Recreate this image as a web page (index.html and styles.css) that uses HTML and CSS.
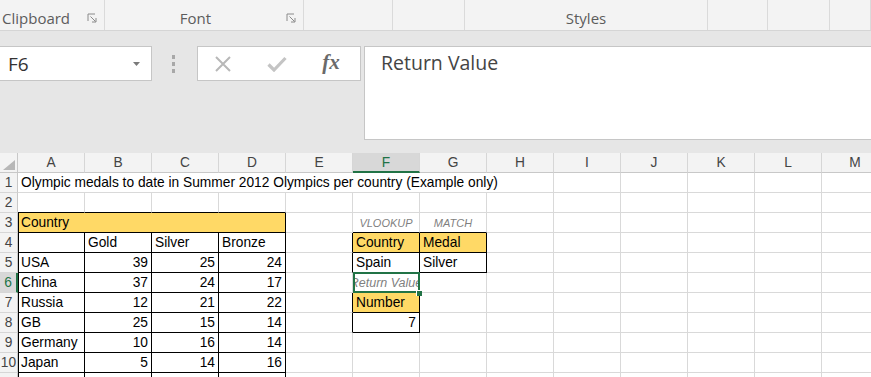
FILE: index.html
```html
<!DOCTYPE html>
<html lang="en">
<head>
    <meta charset="UTF-8">
    <title>Olympic medals - VLOOKUP / MATCH</title>
    <link rel="stylesheet" href="styles.css">
</head>
<body>
    <div class="ribbon">
        <div class="group group-left"><span class="label">Clipboard</span><span class="launcher"><svg width="10" height="10" viewBox="0 0 10 10"><path d="M1 8V1h7" fill="none" stroke="#8a8a8a"/><path d="M3.5 3.5l5 5M9 5v4H5" fill="none" stroke="#8a8a8a"/></svg></span></div>
        <div class="group"><span class="label">Font</span><span class="launcher"><svg width="10" height="10" viewBox="0 0 10 10"><path d="M1 8V1h7" fill="none" stroke="#8a8a8a"/><path d="M3.5 3.5l5 5M9 5v4H5" fill="none" stroke="#8a8a8a"/></svg></span></div>
        <div class="group"></div>
        <div class="group"></div>
        <div class="group"><span class="label">Styles</span></div>
        <div class="group"></div>
        <div class="group"></div>
        <div class="group"></div>
    </div>

    <div class="formula-bar">
        <div class="name-box">
            <span>F6</span>
            <svg class="drop" width="7" height="4" viewBox="0 0 7 4"><path d="M0 0h7L3.5 4z" fill="#7a7a7a"/></svg>
        </div>
        <div class="grip"><i></i><i></i><i></i></div>
        <div class="fx-buttons">
            <span class="fx-slot"><svg width="18" height="16" viewBox="0 0 18 16"><path d="M2 1l14 14M16 1L2 15" stroke="#b8b8b8" stroke-width="2"/></svg></span>
            <span class="fx-slot"><svg width="20" height="16" viewBox="0 0 20 16"><path d="M1.5 8.5l5.5 5.5L18.5 2" fill="none" stroke="#c4c4c4" stroke-width="3.2"/></svg></span>
            <span class="fx-slot fx">fx</span>
        </div>
        <div class="formula-input">Return Value</div>
    </div>

    <div class="sheet">
        <!-- column headers -->
        <div class="corner"><svg width="12" height="10" viewBox="0 0 12 10"><path d="M12 0v10H0z" fill="#b7b7b7"/></svg></div>
        <div class="h">A</div><div class="h">B</div><div class="h">C</div><div class="h">D</div><div class="h">E</div>
        <div class="h on">F</div><div class="h">G</div><div class="h">H</div><div class="h">I</div><div class="h">J</div>
        <div class="h">K</div><div class="h">L</div><div class="h">M</div>

        <!-- row 1 -->
        <div class="rh">1</div>
        <div class="c span8">Olympic medals to date in Summer 2012 Olympics per country (Example only)</div>
        <div class="c"></div><div class="c"></div><div class="c"></div><div class="c"></div><div class="c"></div>

        <!-- row 2 -->
        <div class="rh">2</div>
        <div class="c kb"></div><div class="c kb"></div><div class="c kb"></div><div class="c kb"></div>
        <div class="c"></div><div class="c"></div><div class="c"></div><div class="c"></div><div class="c"></div>
        <div class="c"></div><div class="c"></div><div class="c"></div><div class="c"></div>

        <!-- row 3 -->
        <div class="rh">3</div>
        <div class="c y k kl span4">Country</div>
        <div class="c"></div>
        <div class="c note kb">VLOOKUP</div><div class="c note kb">MATCH</div>
        <div class="c"></div><div class="c"></div><div class="c"></div><div class="c"></div><div class="c"></div><div class="c"></div>

        <!-- row 4 -->
        <div class="rh">4</div>
        <div class="c k kl"></div><div class="c k">Gold</div><div class="c k">Silver</div><div class="c k">Bronze</div>
        <div class="c kr"></div>
        <div class="c y k">Country</div><div class="c y k">Medal</div>
        <div class="c"></div><div class="c"></div><div class="c"></div><div class="c"></div><div class="c"></div><div class="c"></div>

        <!-- row 5 -->
        <div class="rh">5</div>
        <div class="c k kl">USA</div><div class="c k n">39</div><div class="c k n">25</div><div class="c k n">24</div>
        <div class="c kr"></div>
        <div class="c k">Spain</div><div class="c k">Silver</div>
        <div class="c"></div><div class="c"></div><div class="c"></div><div class="c"></div><div class="c"></div><div class="c"></div>

        <!-- row 6 -->
        <div class="rh on">6</div>
        <div class="c k kl">China</div><div class="c k n">37</div><div class="c k n">24</div><div class="c k n">17</div>
        <div class="c"></div>
        <div class="c kb sel"><span class="clip"><span>Return Value</span></span></div>
        <div class="c"></div><div class="c"></div><div class="c"></div><div class="c"></div><div class="c"></div><div class="c"></div><div class="c"></div>

        <!-- row 7 -->
        <div class="rh">7</div>
        <div class="c k kl">Russia</div><div class="c k n">12</div><div class="c k n">21</div><div class="c k n">22</div>
        <div class="c kr"></div>
        <div class="c y k">Number</div>
        <div class="c"></div><div class="c"></div><div class="c"></div><div class="c"></div><div class="c"></div><div class="c"></div><div class="c"></div>

        <!-- row 8 -->
        <div class="rh">8</div>
        <div class="c k kl">GB</div><div class="c k n">25</div><div class="c k n">15</div><div class="c k n">14</div>
        <div class="c kr"></div>
        <div class="c k n">7</div>
        <div class="c"></div><div class="c"></div><div class="c"></div><div class="c"></div><div class="c"></div><div class="c"></div><div class="c"></div>

        <!-- row 9 -->
        <div class="rh">9</div>
        <div class="c k kl">Germany</div><div class="c k n">10</div><div class="c k n">16</div><div class="c k n">14</div>
        <div class="c"></div><div class="c"></div><div class="c"></div><div class="c"></div><div class="c"></div>
        <div class="c"></div><div class="c"></div><div class="c"></div><div class="c"></div>

        <!-- row 10 -->
        <div class="rh">10</div>
        <div class="c k kl">Japan</div><div class="c k n">5</div><div class="c k n">14</div><div class="c k n">16</div>
        <div class="c"></div><div class="c"></div><div class="c"></div><div class="c"></div><div class="c"></div>
        <div class="c"></div><div class="c"></div><div class="c"></div><div class="c"></div>

        <!-- row 11 -->
        <div class="rh">11</div>
        <div class="c k kl"></div><div class="c k"></div><div class="c k"></div><div class="c k"></div>
        <div class="c"></div><div class="c"></div><div class="c"></div><div class="c"></div><div class="c"></div>
        <div class="c"></div><div class="c"></div><div class="c"></div><div class="c"></div>
    </div>
</body>
</html>
```

FILE: styles.css
```css
body {
    margin: 0;
    width: 871px;
    height: 377px;
    overflow: hidden;
    background: #fff;
    font-family: "Liberation Sans", Arial, sans-serif;
}

/* ribbon group labels */
.ribbon {
    height: 31px;
    box-sizing: border-box;
    background: #f3f3f3;
    border-bottom: 1px solid #d5d5d5;
    display: grid;
    grid-template-columns: 105px 199px 89px 72px 243px 60px 62px 1fr;
}
.group {
    display: flex;
    align-items: flex-end;
    padding-bottom: 2px;
    border-right: 1px solid #dadada;
    font-family: "Open Sans", "Noto Sans", sans-serif;
    font-size: 15px;
    color: #5c5c5c;
}
.group .label {
    flex: 1;
    text-align: center;
    line-height: 20px;
}
.group-left .label {
    text-align: left;
    padding-left: 2px;
}
.launcher {
    width: 10px;
    height: 10px;
    margin: 0 7px 5px 0;
}
.launcher svg {
    display: block;
}

/* name box + formula input */
.formula-bar {
    height: 122px;
    box-sizing: border-box;
    padding-top: 15px;
    background: #e6e6e6;
    display: flex;
    align-items: flex-start;
}
.name-box {
    width: 153px;
    height: 35px;
    box-sizing: border-box;
    margin-left: -1px;
    padding: 0 11px 0 8px;
    background: #fff;
    border: 1px solid #c6c6c6;
    display: flex;
    align-items: center;
    justify-content: space-between;
    font-family: "Open Sans", "Noto Sans", sans-serif;
    font-size: 19px;
    color: #333;
}
.grip {
    margin: 9px 22px 0 20px;
    display: flex;
    flex-direction: column;
    gap: 3px;
}
.grip i {
    width: 3px;
    height: 4px;
    background: #a8a8a8;
}
.fx-buttons {
    width: 164px;
    height: 35px;
    box-sizing: border-box;
    background: #fff;
    border: 1px solid #c6c6c6;
    display: flex;
    align-items: center;
}
.fx-slot {
    width: 54px;
    display: flex;
    justify-content: center;
}
.fx-slot:first-child {
    margin-left: -2px;
}
.fx {
    font-family: "Liberation Serif", "DejaVu Serif", serif;
    font-style: italic;
    font-weight: bold;
    font-size: 21px;
    color: #6a6a6a;
    margin-top: -3px;
}
.formula-input {
    flex: 1;
    height: 94px;
    box-sizing: border-box;
    margin-left: 3px;
    padding: 3px 16px;
    background: #fff;
    border: 1px solid #c6c6c6;
    border-right: none;
    font-family: "Open Sans", "Noto Sans", sans-serif;
    font-size: 19.5px;
    line-height: 26px;
    color: #444;
}

/* worksheet */
.sheet {
    display: grid;
    grid-template-columns: 18px repeat(13, 67px);
    grid-auto-rows: 20px;
    font-size: 13.75px;
}
.corner,
.h,
.rh {
    background: #f3f3f3;
    color: #444;
    box-sizing: border-box;
    display: flex;
    align-items: center;
    justify-content: center;
}
.corner {
    border-right: 1px solid #c8c8c8;
    border-bottom: 1px solid #c8c8c8;
    align-items: flex-end;
    justify-content: flex-end;
    padding: 0 2px 2px 0;
}
.corner svg {
    display: block;
}
.h {
    border-right: 1px solid #d6d6d6;
    border-bottom: 1px solid #c8c8c8;
}
.rh {
    border-right: 1px solid #c8c8c8;
    border-bottom: 1px solid #d6d6d6;
}
.h.on {
    background: #d8d8d8;
    color: #217346;
    border-bottom: 2px solid #217346;
}
.rh.on {
    background: #d8d8d8;
    color: #217346;
    border-right: 2px solid #217346;
}

.c {
    box-sizing: border-box;
    border-right: 1px solid #d9d9d9;
    border-bottom: 1px solid #d9d9d9;
    padding: 0 3px 1px;
    display: flex;
    align-items: flex-end;
    line-height: 16px;
    color: #000;
    white-space: nowrap;
}
.span8 {
    grid-column: span 8;
}
.span4 {
    grid-column: span 4;
}
.y {
    background: #ffd966;
}
.k {
    border-right-color: #000;
    border-bottom-color: #000;
}
.kb {
    border-bottom-color: #000;
}
.kr {
    border-right-color: #000;
}
.kl {
    border-left: 1px solid #000;
    padding-left: 2px;
}
.n {
    justify-content: flex-end;
}
.note {
    justify-content: center;
    font-style: italic;
    font-size: 11px;
    color: #7f7f7f;
    padding-bottom: 1px;
}

/* active cell */
.sel {
    position: relative;
    padding: 0 0 1px;
}
.sel .clip {
    width: 100%;
    display: flex;
    justify-content: center;
    overflow: hidden;
    font-style: italic;
    font-size: 12.5px;
    color: #7f7f7f;
}
.sel::after {
    content: "";
    position: absolute;
    top: -1px;
    left: 0;
    right: -1px;
    bottom: -1px;
    border: 2px solid #217346;
}
.sel::before {
    content: "";
    position: absolute;
    right: -3px;
    bottom: -4px;
    width: 5px;
    height: 5px;
    background: #217346;
    border-top: 1px solid #fff;
    border-left: 1px solid #fff;
    z-index: 1;
}
```
